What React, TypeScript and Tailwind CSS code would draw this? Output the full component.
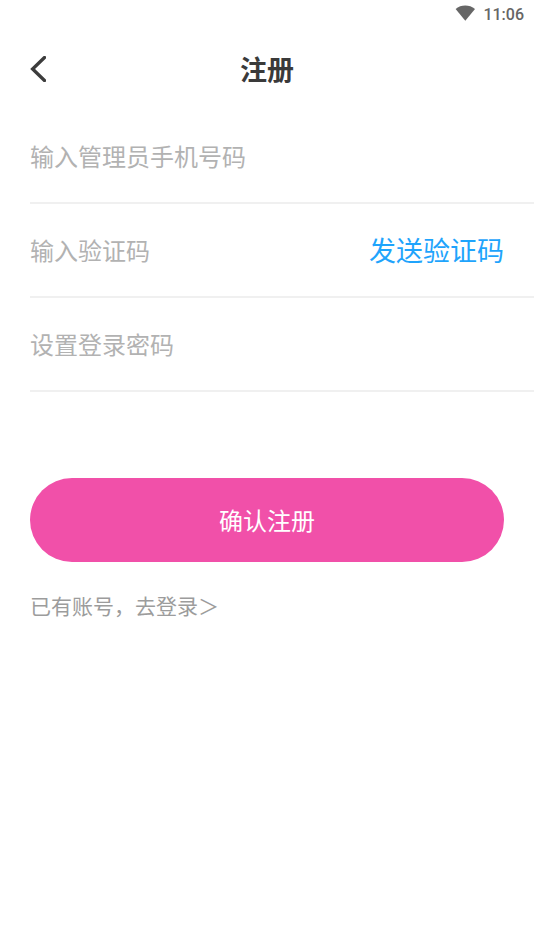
const fields = [
  { id: "phone", placeholder: "输入管理员手机号码", type: "tel" },
  { id: "code", placeholder: "输入验证码", type: "text", action: "发送验证码" },
  { id: "password", placeholder: "设置登录密码", type: "password" },
];

const StatusBar = () => (
  <div className="flex h-[30px] items-center justify-end gap-2 pr-[10px]">
    <svg viewBox="0 0 20 20" className="size-5" fill="#666666" aria-hidden="true">
      <path d="M10.3 15.8 L0.6 4 C6 -0.6 14.4 -0.6 20 4 Z" />
    </svg>
    <span className="font-[Roboto] text-base font-medium text-[#666666]">11:06</span>
  </div>
);

const App = () => {
  return (
    <div className="min-h-screen bg-white font-['Noto_Sans_CJK_SC',sans-serif]">
      <StatusBar />

      <header className="mb-0.5 grid h-[78px] grid-cols-[1fr_auto_1fr] items-center px-[30px]">
        <button type="button" aria-label="返回" className="justify-self-start">
          <svg viewBox="0 0 16 26" className="h-[26px] w-4" fill="none" stroke="#3c3c3c" strokeWidth="3.3" aria-hidden="true">
            <path d="M14.5 1.5 L2.6 13 L14.5 24.5" strokeLinecap="round" />
          </svg>
        </button>
        <h1 className="text-[27px] font-bold text-[#3a3a3a]">注册</h1>
      </header>

      <form onSubmit={(e) => e.preventDefault()}>
        <div className="pl-[30px]">
          {fields.map((field) => (
            <div key={field.id} className="flex h-[94px] items-center border-b-2 border-[#f0f0f0] pr-[30px]">
              <input
                id={field.id}
                type={field.type}
                aria-label={field.placeholder}
                placeholder={field.placeholder}
                className="min-w-0 flex-1 text-2xl outline-none placeholder:text-[#b2b2b2]"
              />
              {field.action && (
                <button type="button" className="text-[27px] text-[#1fa4fc]">
                  {field.action}
                </button>
              )}
            </div>
          ))}
        </div>

        <div className="px-[30px] pt-[86px]">
          <button type="submit" className="h-[84px] w-full rounded-full bg-[#f150a9] text-2xl text-white">
            确认注册
          </button>
          <a href="#login" className="mt-7 inline-block text-[21px] text-[#9c9c9c]">
            已有账号，去登录＞
          </a>
        </div>
      </form>
    </div>
  );
};

export default App;
